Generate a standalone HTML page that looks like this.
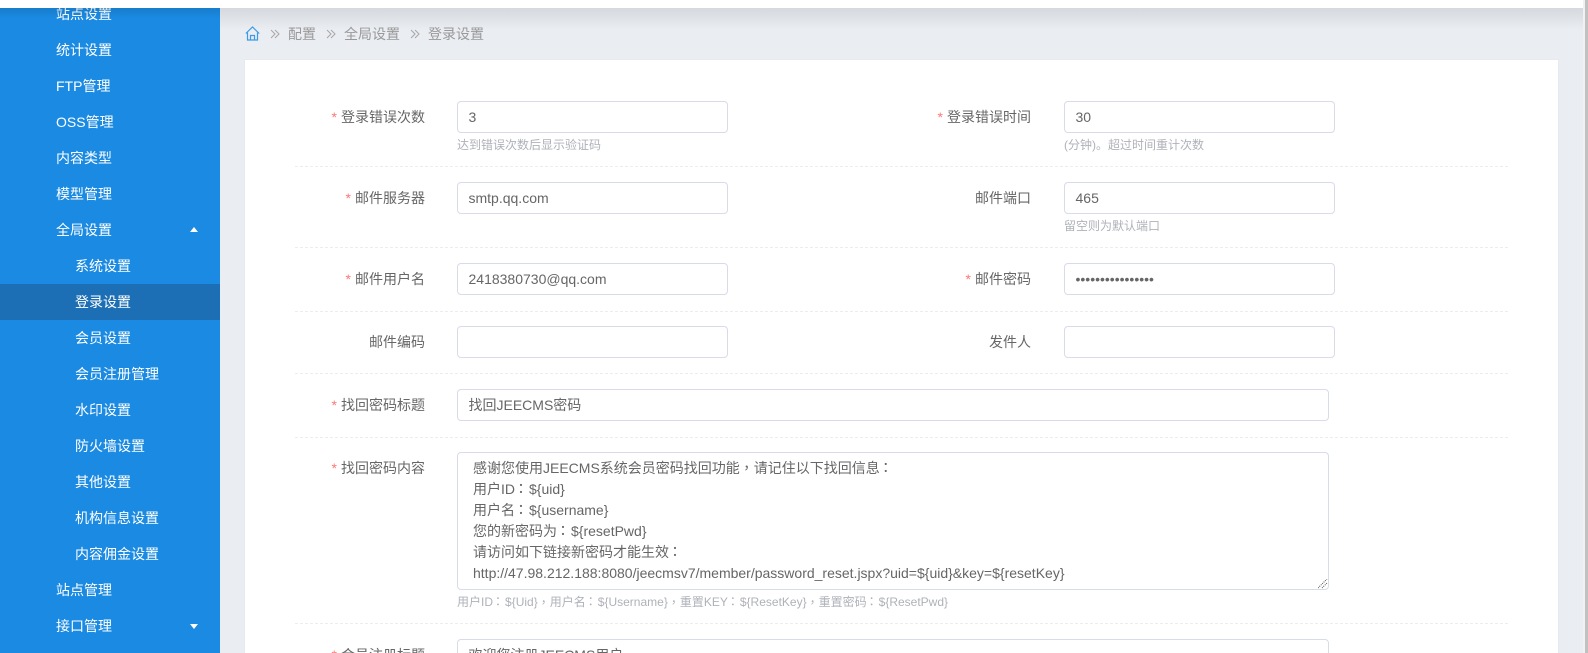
<!DOCTYPE html>
<html lang="zh">
<head>
<meta charset="utf-8">
<title>登录设置</title>
<style>
html,body{margin:0;padding:0;width:1588px;height:653px;overflow:hidden;background:#eaedf2}
body{position:relative;font-family:"Liberation Sans","Noto Sans CJK SC",sans-serif;font-size:14px;color:#666}
div,span{position:absolute;white-space:nowrap}
i{font-style:normal;position:relative;left:2.5px;top:-1px}
i.c{left:3.5px;top:-4px}
.h i{left:2px}
.h i.c{left:3px;top:-3px}
#top{left:0;top:0;width:1583px;height:8px;background:#fff;z-index:5}
#shadow{left:220px;top:8px;width:1363px;height:22px;background:linear-gradient(#d5d9de,#eaedf2)}
#side{left:0;top:8px;width:220px;height:645px;background:#1a8ae2;overflow:hidden}
#sshadow{left:0;top:8px;width:220px;height:10px;background:linear-gradient(rgba(0,0,0,.1),rgba(0,0,0,0))}
#sbg{left:1583px;top:0;width:5px;height:653px;background:#f1f1f1}
#sth{left:1585px;top:0;width:3px;height:653px;background:#c1c1c1}
.m{color:#fff;height:36px;line-height:37px;left:56px;font-size:14px}
.s{left:75px}
.hl{left:0;top:276px;width:220px;height:36px;background:#1d6fb5}
.up,.dn{left:190px;width:0;height:0;border-left:4px solid transparent;border-right:4px solid transparent}
.up{border-bottom:5px solid #fff}
.dn{border-top:5px solid #fff}
.bc{top:24px;height:20px;line-height:20px;color:#999;font-size:14px}
#card{left:245px;top:60px;width:1313px;height:593px;background:#fff;box-shadow:0 0 0 1px #e6eaf0}
.d{left:295px;width:1213px;height:0;border-top:1px dashed #ebedf0}
.l{text-align:right;height:20px;line-height:20px;font-size:14px;color:#666}
.l1{left:300px;width:125px}
.l2{left:900px;width:131px}
.l b{font-weight:normal;color:#f77;margin-right:4px;font-size:14px}
.n{box-sizing:border-box;height:32px;line-height:30px;border:1px solid #d8dce8;border-radius:4px;background:#fff;padding-left:10.5px;color:#666;font-size:14px}
.w1{left:457px;width:271px}
.w2{left:1064px;width:271px}
.w3{left:457px;width:872px}
.h{font-size:12px;color:#aeb2b8;height:16px;line-height:16px}
.ta{left:457px;top:452px;width:872px;height:138px;box-sizing:border-box;border:1px solid #d8dce8;border-radius:4px;background:#fff}
.t{left:473px;height:21px;line-height:21px;font-size:14px;color:#666}
</style>
</head>
<body>
<div id="shadow"></div>
<div id="top"></div>
<div id="side">
  <div class="hl"></div>
  <div class="m" style="top:-12px">站点设置</div>
  <div class="m" style="top:24px">统计设置</div>
  <div class="m" style="top:60px">FTP管理</div>
  <div class="m" style="top:96px">OSS管理</div>
  <div class="m" style="top:132px">内容类型</div>
  <div class="m" style="top:168px">模型管理</div>
  <div class="m" style="top:204px">全局设置</div>
  <div class="up" style="top:219px"></div>
  <div class="m s" style="top:240px">系统设置</div>
  <div class="m s" style="top:276px">登录设置</div>
  <div class="m s" style="top:312px">会员设置</div>
  <div class="m s" style="top:348px">会员注册管理</div>
  <div class="m s" style="top:384px">水印设置</div>
  <div class="m s" style="top:420px">防火墙设置</div>
  <div class="m s" style="top:456px">其他设置</div>
  <div class="m s" style="top:492px">机构信息设置</div>
  <div class="m s" style="top:528px">内容佣金设置</div>
  <div class="m" style="top:564px">站点管理</div>
  <div class="m" style="top:600px">接口管理</div>
  <div class="dn" style="top:616px"></div>
</div>
<div id="sshadow"></div>

<svg style="position:absolute;left:245px;top:26px" width="15" height="15" viewBox="0 0 15 15" fill="none" stroke="#3b9be8" stroke-width="1.2"><path d="M.8 7.5 7.5 1l6.7 6.5"/><path d="M2.5 6.5v7.5h10V6.5"/><path d="M5.5 14V9.5h4V14"/></svg>
<svg style="position:absolute;left:270px;top:29px" width="10" height="10" viewBox="0 0 10 10" fill="none" stroke="#aaa" stroke-width="1.1"><path d="M1 1l4 4-4 4M5 1l4 4-4 4"/></svg>
<div class="bc" style="left:288px">配置</div>
<svg style="position:absolute;left:326px;top:29px" width="10" height="10" viewBox="0 0 10 10" fill="none" stroke="#aaa" stroke-width="1.1"><path d="M1 1l4 4-4 4M5 1l4 4-4 4"/></svg>
<div class="bc" style="left:344px">全局设置</div>
<svg style="position:absolute;left:410px;top:29px" width="10" height="10" viewBox="0 0 10 10" fill="none" stroke="#aaa" stroke-width="1.1"><path d="M1 1l4 4-4 4M5 1l4 4-4 4"/></svg>
<div class="bc" style="left:428px">登录设置</div>

<div id="card"></div>

<div class="l l1" style="top:107px"><b>*</b>登录错误次数</div>
<div class="n w1" style="top:101px">3</div>
<div class="h" style="left:457px;top:137px">达到错误次数后显示验证码</div>
<div class="l l2" style="top:107px"><b>*</b>登录错误时间</div>
<div class="n w2" style="top:101px">30</div>
<div class="h" style="left:1064px;top:137px">(分钟)。超过时间重计次数</div>
<div class="d" style="top:166px"></div>

<div class="l l1" style="top:188px"><b>*</b>邮件服务器</div>
<div class="n w1" style="top:182px">smtp.qq.com</div>
<div class="l l2" style="top:188px">邮件端口</div>
<div class="n w2" style="top:182px">465</div>
<div class="h" style="left:1064px;top:218px">留空则为默认端口</div>
<div class="d" style="top:247px"></div>

<div class="l l1" style="top:269px"><b>*</b>邮件用户名</div>
<div class="n w1" style="top:263px">2418380730@qq.com</div>
<div class="l l2" style="top:269px"><b>*</b>邮件密码</div>
<div class="n w2" style="top:263px">••••••••••••••••</div>
<div class="d" style="top:311px"></div>

<div class="l l1" style="top:332px">邮件编码</div>
<div class="n w1" style="top:326px"></div>
<div class="l l2" style="top:332px">发件人</div>
<div class="n w2" style="top:326px"></div>
<div class="d" style="top:373px"></div>

<div class="l l1" style="top:395px"><b>*</b>找回密码标题</div>
<div class="n w3" style="top:389px">找回JEECMS密码</div>
<div class="d" style="top:437px"></div>

<div class="l l1" style="top:458px"><b>*</b>找回密码内容</div>
<div class="ta"></div>
<div class="t" style="top:458px">感谢您使用JEECMS系统会员密码找回功能<i class="c">，</i>请记住以下找回信息<i>：</i></div>
<div class="t" style="top:479px">用户ID<i>：</i>${uid}</div>
<div class="t" style="top:500px">用户名<i>：</i>${username}</div>
<div class="t" style="top:521px">您的新密码为<i>：</i>${resetPwd}</div>
<div class="t" style="top:542px">请访问如下链接新密码才能生效<i>：</i></div>
<div class="t" style="top:563px">http://47.98.212.188:8080/jeecmsv7/member/password_reset.jspx?uid=${uid}&amp;key=${resetKey}</div>
<svg style="position:absolute;left:1318px;top:579px" width="10" height="10" viewBox="0 0 10 10" stroke="#555" stroke-width="1" stroke-dasharray="1 1" fill="none"><path d="M0 9 9 0M4 9l5-5"/></svg>
<div class="h" style="left:457px;top:594px">用户ID<i>：</i>${Uid}<i class="c">，</i>用户名<i>：</i>${Username}<i class="c">，</i>重置KEY<i>：</i>${ResetKey}<i class="c">，</i>重置密码<i>：</i>${ResetPwd}</div>
<div class="d" style="top:623px"></div>

<div class="l l1" style="top:645px"><b>*</b>会员注册标题</div>
<div class="n w3" style="top:639px">欢迎您注册JEECMS用户</div>

<div id="sbg"></div>
<div id="sth"></div>
</body>
</html>
